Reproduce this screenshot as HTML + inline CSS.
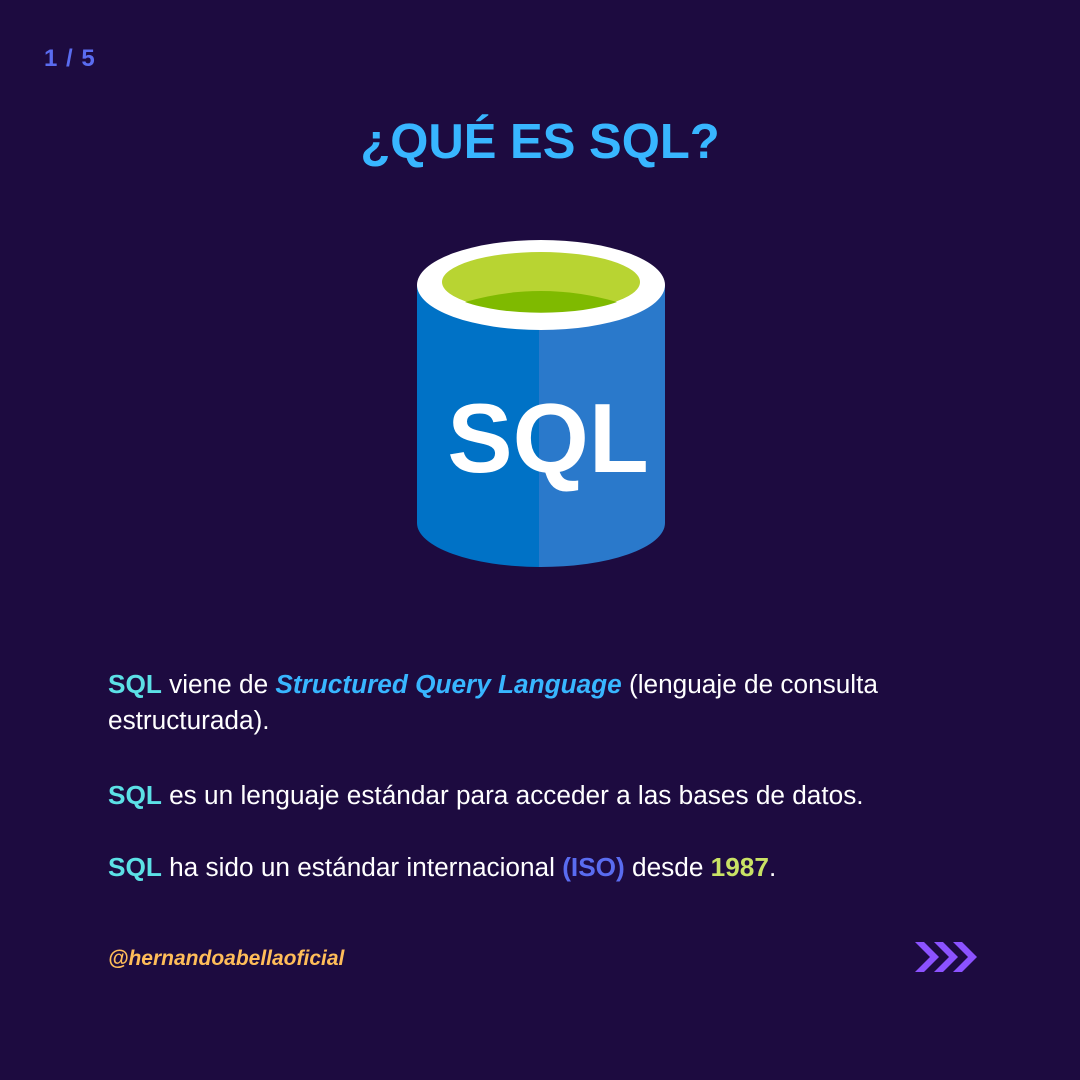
<!DOCTYPE html>
<html><head><meta charset="utf-8"><style>
body{margin:0;width:1080px;height:1080px;background:#1d0b40;font-family:"Liberation Sans",sans-serif;position:relative;overflow:hidden;color:#fff}
.pg{position:absolute;left:44px;top:45px;font-size:24px;font-weight:bold;color:#5a6cf0;letter-spacing:1px}
.t{position:absolute;left:0;width:1080px;top:114px;text-align:center;font-size:49px;font-weight:bold;color:#38b6ff}
.p{position:absolute;left:108px;font-size:26.2px;line-height:36px;width:800px;font-weight:normal}
.c{color:#5ce1e6;font-weight:bold}
.h{position:absolute;left:108px;top:947px;font-size:21px;font-weight:bold;font-style:italic;color:#ffbd59}
</style></head><body>
<div class="pg">1 / 5</div>
<div class="t">¿QUÉ ES SQL?</div>
<svg width="1080" height="1080" style="position:absolute;left:0;top:0">
<path d="M417 285 L417 523 A124 44 0 0 0 539 567 L539 285Z" fill="#0072c6"/>
<path d="M539 285 L539 567 A124 44 0 0 0 665 523 L665 285Z" fill="#2a79cb"/>
<ellipse cx="541" cy="285" rx="124" ry="45" fill="#fff"/>
<ellipse cx="541" cy="282" rx="99" ry="30" fill="#b8d432"/>
<path d="M465 302 Q541 280 617 302 A99 30 0 0 1 465 302Z" fill="#7fba00"/>
<text x="548" y="472" text-anchor="middle" font-family="Liberation Sans" font-weight="bold" font-size="98" fill="#fff">SQL</text>
<path d="M915 942 L930 957 L915 972 L924 972 L939 957 L924 942Z M934 942 L949 957 L934 972 L943 972 L958 957 L943 942Z M953 942 L968 957 L953 972 L962 972 L977 957 L962 942Z" fill="#8c52ff"/>
</svg>
<div class="p" style="top:666px"><span class="c">SQL</span> viene de <span style="color:#38b6ff;font-style:italic;font-weight:bold">Structured Query Language</span> (lenguaje de consulta estructurada).</div>
<div class="p" style="top:777px"><span class="c">SQL</span> es un lenguaje estándar para acceder a las bases de datos.</div>
<div class="p" style="top:849px"><span class="c">SQL</span> ha sido un estándar internacional <span style="color:#5a6cf0;font-weight:bold">(ISO)</span> desde <span style="color:#c9e265;font-weight:bold">1987</span>.</div>
<div class="h">@hernandoabellaoficial</div>
</body></html>
